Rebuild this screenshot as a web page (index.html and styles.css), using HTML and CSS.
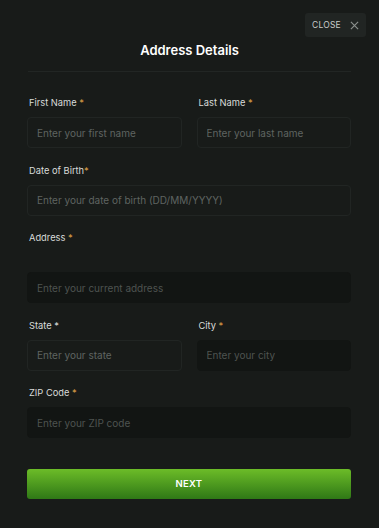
FILE: index.html
```html
<!DOCTYPE html>
<html>
<head>
	<title>Address Details</title>
	<meta charset="utf-8">
	<meta name="viewport" content="width=device-width, initial-scale=1.0">
	<link rel="stylesheet" href="styles.css">
</head>
<body>
	<div class="modal">
		<div class="top">
			<button class="close-btn">CLOSE
				<svg width="9" height="9" viewBox="0 0 10 10"><path d="M1 1L9 9M9 1L1 9" stroke="#8a8f8c" stroke-width="1.3" fill="none"/></svg>
			</button>
		</div>
		<h1 class="title">Address Details</h1>
		<div class="divider"></div>

		<form class="form">
			<div class="row two">
				<div class="field">
					<label>First Name <span class="req">*</span></label>
					<input type="text" placeholder="Enter your first name">
				</div>
				<div class="field">
					<label>Last Name <span class="req">*</span></label>
					<input type="text" placeholder="Enter your last name">
				</div>
			</div>

			<div class="field">
				<label>Date of Birth<span class="req">*</span></label>
				<input type="text" placeholder="Enter your date of birth (DD/MM/YYYY)">
			</div>

			<div class="field address">
				<label>Address <span class="req">*</span></label>
				<input type="text" class="filled" placeholder="Enter your current address">
			</div>

			<div class="row two">
				<div class="field">
					<label>State <span class="req white">*</span></label>
					<input type="text" placeholder="Enter your state">
				</div>
				<div class="field">
					<label>City <span class="req">*</span></label>
					<input type="text" class="filled" placeholder="Enter your city">
				</div>
			</div>

			<div class="field">
				<label>ZIP Code <span class="req">*</span></label>
				<input type="text" class="filled" placeholder="Enter your ZIP code">
			</div>

			<button type="button" class="next-btn">NEXT</button>
		</form>
	</div>
</body>
</html>
```

FILE: styles.css
```css
*,*::after,*::before{
	box-sizing: border-box;
	margin: 0;
	padding: 0;
	font-family: 'Inter', 'Noto Sans', sans-serif;
}

body{
	background-color: #181b19;
	width: 379px;
	height: 528px;
	overflow: hidden;
}

.modal{
	padding: 13px 13px 0 13px;
}

.top{
	display: flex;
	justify-content: flex-end;
}

.close-btn{
	height: 24px;
	width: 61px;
	background-color: #212523;
	border: none;
	border-radius: 3px;
	color: #c9ccca;
	font-size: 8.5px;
	letter-spacing: 0.2px;
	display: flex;
	align-items: center;
	justify-content: center;
	gap: 9px;
}

.title{
	margin-top: 5px;
	text-align: center;
	color: #ffffff;
	font-size: 13px;
	font-weight: 600;
	line-height: 16px;
}

.divider{
	margin: 13px 15px 0 15px;
	height: 1px;
	background-color: #222624;
}

.form{
	padding: 25px 15px 0 14px;
	display: flex;
	flex-direction: column;
	gap: 16.5px;
}

.row.two{
	display: grid;
	grid-template-columns: 1fr 1fr;
	gap: 15px;
}

.field{
	display: flex;
	flex-direction: column;
	gap: 8px;
}

.field label{
	color: #d9dcda;
	font-size: 9.3px;
	font-weight: 400;
	line-height: 12px;
	padding-left: 2px;
}

.req{
	color: #d89b45;
}

.req.white{
	color: #d9dcda;
}

.field.address{
	gap: 28px;
}

input{
	height: 31px;
	width: 100%;
	background-color: transparent;
	border: 1px solid #212523;
	border-radius: 4px;
	padding: 0 9px;
	color: #ffffff;
	font-size: 10px;
	outline: none;
}

input::placeholder{
	color: #5f6461;
}

input.filled{
	background-color: #121513;
	border-color: #121513;
}

input.filled::placeholder{
	color: #4e5350;
}

.next-btn{
	margin-top: 14px;
	height: 30px;
	width: 100%;
	border: none;
	border-radius: 3px;
	background: linear-gradient(#6cbc28, #2f7816);
	color: #ffffff;
	font-size: 9.5px;
	font-weight: 600;
	letter-spacing: 0.3px;
}
```
